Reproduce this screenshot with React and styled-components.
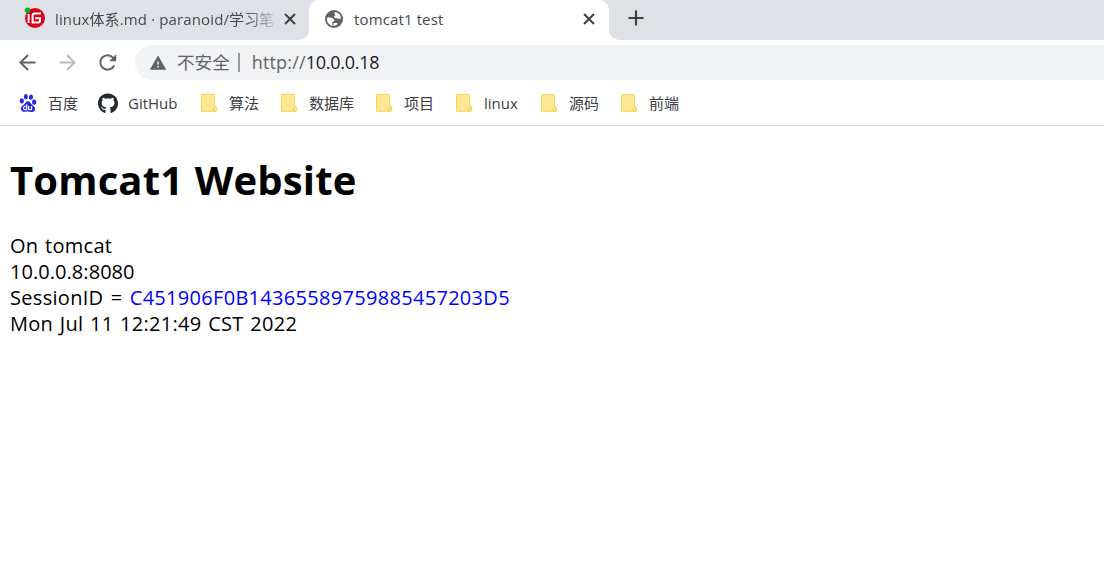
import React from "react";
import styled, { createGlobalStyle } from "styled-components";
import { MdWarning } from "react-icons/md";
import { SiBaidu } from "react-icons/si";
import { FaGithub } from "react-icons/fa";

const Global = createGlobalStyle`
  * { box-sizing: border-box; }
  body { margin: 0; background: #fff; overflow: hidden; font-family: "Open Sans", "Noto Sans CJK SC", sans-serif; }
`;
const Window = styled.div`
  display: flex;
  flex-direction: column;
  height: 572px;
`;
const TabStrip = styled.div`
  display: flex;
  height: 40px;
  background: #fff;
`;
const Tab = styled.div`
  display: flex;
  align-items: center;
  height: 40px;
  width: ${(p) => p.$width}px;
  padding: 0 ${(p) => (p.$active ? 11 : 10)}px 3px ${(p) => p.$inset}px;
  background: ${(p) => (p.$active ? "#fff" : "#dee1e6")};
  border-radius: ${(p) => (p.$active ? "10px 10px 0 0" : "0 0 10px 0")};
`;
const ActiveBacking = styled.div`
  background: linear-gradient(#dee1e6 20px, #fff 20px);
`;
const Favicon = styled.span`
  display: flex;
  flex: none;
  margin-right: ${(p) => p.$gap}px;
  padding-bottom: ${(p) => p.$lift || 0}px;
`;
const TabTitle = styled.span`
  flex: 1;
  min-width: 0;
  white-space: nowrap;
  font-size: 15px;
  line-height: 24px;
  padding-top: 1px;
  letter-spacing: 0.13px;
  color: #45494d;
  ${(p) => p.$fade && "mask-image: linear-gradient(to right, #000 190px, transparent 226px);"}
`;
const CloseIcon = styled.svg`
  flex: none;
  width: 18px;
  height: 18px;
  stroke: #3c4043;
  stroke-width: 2;
`;
const StripRest = styled.div`
  flex: 1;
  display: flex;
  align-items: center;
  padding: 0 0 4px 18px;
  background: #dee1e6;
  border-bottom-left-radius: 10px;
`;
const Toolbar = styled.div`
  display: flex;
  align-items: center;
  height: 45px;
  padding-left: 15px;
`;
const NavButton = styled.span`
  display: flex;
  width: 40px;
  color: ${(p) => (p.$disabled ? "#babcbe" : "#5f6368")};
`;
const NavIcon = styled.svg`
  width: 25px;
  height: 25px;
  fill: none;
  stroke: currentColor;
  stroke-width: 2;
`;
const AddressBar = styled.div`
  display: flex;
  align-items: center;
  flex: 1;
  height: 35px;
  padding-left: 14px;
  background: #f1f3f4;
  border-radius: 18px 0 0 18px;
  font-size: 18px;
  line-height: 35px;
  color: #5f6368;
  white-space: nowrap;
`;
const Security = styled.span`
  margin-left: 10px;
  font-size: 17.6px;
`;
const Divider = styled.span`
  width: 2px;
  height: 19px;
  margin: 0 12px 0 8px;
  background: #96999c;
`;
const Url = styled.span`
  letter-spacing: 0.15px;
`;
const Host = styled.span`
  color: #202124;
  letter-spacing: -0.25px;
`;
const Bookmarks = styled.div`
  display: flex;
  align-items: center;
  gap: 20px;
  height: 41px;
  padding: 0 0 4px 18px;
  border-bottom: 1px solid #d9dadc;
`;
const Bookmark = styled.div`
  display: flex;
  align-items: center;
  gap: 10px;
`;
const BookmarkIcon = styled.span`
  display: flex;
  align-items: center;
  justify-content: center;
  width: 20px;
  height: 20px;
`;
const BookmarkLabel = styled.span`
  width: ${(p) => p.$width}px;
  font-size: 15px;
  line-height: 22px;
  color: #3c4043;
  white-space: nowrap;
`;
const Page = styled.main`
  padding: 27px 10px;
  color: #000;
  font-size: 20px;
  line-height: 26px;
`;
const Heading = styled.h1`
  margin: 0 0 26px;
  font-size: 40px;
  line-height: 54px;
  font-weight: 700;
  letter-spacing: 0.15px;
  word-spacing: 1px;
  white-space: nowrap;
`;
const Line = styled.div`
  white-space: nowrap;
  letter-spacing: ${(p) => p.$spacing ?? 0.28}px;
  word-spacing: ${(p) => p.$wordSpacing ?? 1.2}px;
`;
const Session = styled.span`
  color: #0000ff;
`;

const Close = () => (
  <CloseIcon viewBox="0 0 18 18"><path d="M4 4 14 14M14 4 4 14" /></CloseIcon>
);
const GiteeIcon = () => (
  <svg width="22" height="22" viewBox="0 0 22 22">
    <circle cx="12" cy="12" r="10" fill="#d8001b" />
    <path d="M18 7.5H11.8Q9.6 7.5 9.6 9.7V16.5H15.3Q17 16.5 17 14.8V12.3H12" fill="none" stroke="#fff" strokeWidth="2" />
    <path d="M5.6 8V17" stroke="#fff" strokeWidth="2" />
    <circle cx="4.5" cy="4.3" r="2.7" fill="#00b51d" />
  </svg>
);
const GlobeIcon = () => (
  <svg width="18" height="18" viewBox="0 0 18 18">
    <circle cx="9" cy="9" r="9" fill="#5f6368" />
    <path d="M9.8 1.9A7.2 7.2 0 0 1 16 8.2Q15 9.4 13.6 8.8Q12.5 8 11.3 8.2Q9.8 8.4 9.2 6.9Q9 5.4 10.6 5.2Q8.7 4.2 9.8 1.9Z" fill="#fff" />
    <path d="M1.9 7.8Q4 6.8 6.4 7.8Q8.8 8.7 9.4 10.2Q9.6 11.6 7.9 11.8Q7 12 7.2 13.3Q7.1 14.6 8.4 16.1A7.2 7.2 0 0 1 1.9 7.8Z" fill="#fff" />
    <path d="M8.8 12.9H12.6Q12.2 15.2 9.2 16.1Q7.8 14.2 8.8 12.9Z" fill="#fff" />
  </svg>
);
const FolderIcon = () => (
  <svg width="20" height="20" viewBox="0 0 20 20">
    <path d="M2.5 1.5H15.5V13.5L17.2 14V18.3H2.5Z" fill="#ffe793" stroke="#f6d45b" />
    <path d="M14.5 18V14.5Q15.8 12.5 17.3 14.5V17Q16.3 19 14.5 18Z" fill="#ffe793" stroke="#f3cf50" />
  </svg>
);
const BackArrow = () => (
  <NavIcon viewBox="0 0 25 25"><path d="M20.5 12.5H5.5M13 5 5.5 12.5 13 20" /></NavIcon>
);
const ForwardArrow = () => (
  <NavIcon viewBox="0 0 25 25"><path d="M4.5 12.5H19.5M12 5 19.5 12.5 12 20" /></NavIcon>
);
const ReloadArrow = () => (
  <NavIcon viewBox="0 0 25 25">
    <path d="M19.2 15.3A7.2 7.2 0 1 1 18.3 8" />
    <path d="M21.2 4.2V11.3H14.1Z" fill="currentColor" stroke="none" />
  </NavIcon>
);

const bookmarks = [
  { label: "百度", width: 30, icon: <SiBaidu size={18} color="#2529e0" /> },
  { label: "GitHub", width: 51, icon: <FaGithub size={21} color="#24292f" /> },
  { label: "算法", width: 30 },
  { label: "数据库", width: 45 },
  { label: "项目", width: 30 },
  { label: "linux", width: 35 },
  { label: "源码", width: 30 },
  { label: "前端", width: 30 },
];

export default function App() {
  return (
    <Window>
      <Global />
      <TabStrip>
        <Tab $width={309} $inset={23}>
          <Favicon $gap={10} $lift={3}><GiteeIcon /></Favicon>
          <TabTitle $fade>linux体系.md · paranoid/学习笔</TabTitle>
          <Close />
        </Tab>
        <ActiveBacking>
          <Tab $active $width={300} $inset={16}>
            <Favicon $gap={11}><GlobeIcon /></Favicon>
            <TabTitle>tomcat1 test</TabTitle>
            <Close />
          </Tab>
        </ActiveBacking>
        <StripRest>
          <svg width="18" height="18" viewBox="0 0 18 18"><path d="M9 1.5V16.5M1.5 9H16.5" stroke="#3c4043" strokeWidth="2.2" /></svg>
        </StripRest>
      </TabStrip>
      <Toolbar>
        <NavButton><BackArrow /></NavButton>
        <NavButton $disabled><ForwardArrow /></NavButton>
        <NavButton><ReloadArrow /></NavButton>
        <AddressBar>
          <MdWarning size={18} />
          <Security>不安全</Security>
          <Divider />
          <Url>http://</Url>
          <Host>10.0.0.18</Host>
        </AddressBar>
      </Toolbar>
      <Bookmarks>
        {bookmarks.map((b) => (
          <Bookmark key={b.label}>
            <BookmarkIcon>{b.icon || <FolderIcon />}</BookmarkIcon>
            <BookmarkLabel $width={b.width}>{b.label}</BookmarkLabel>
          </Bookmark>
        ))}
      </Bookmarks>
      <Page>
        <Heading>Tomcat1 Website</Heading>
        <Line>On tomcat</Line>
        <Line $spacing={0.05}>10.0.0.8:8080</Line>
        <Line $spacing={0.3} $wordSpacing={1.8}>SessionID = <Session>C451906F0B14365589759885457203D5</Session></Line>
        <Line>Mon Jul 11 12:21:49 CST 2022</Line>
      </Page>
    </Window>
  );
}
